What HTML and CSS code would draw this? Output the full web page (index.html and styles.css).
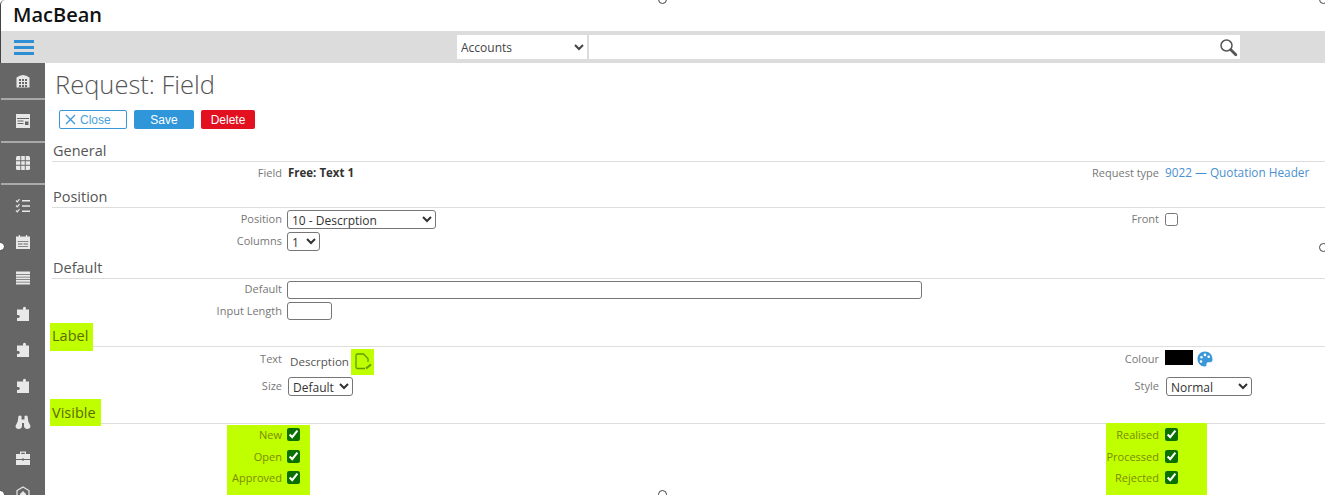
FILE: index.html
```html
<!DOCTYPE html>
<html lang="en">
<head>
<meta charset="utf-8">
<title>Request: Field</title>
<link rel="stylesheet" href="styles.css">
</head>
<body>
<svg class="defs" width="0" height="0" aria-hidden="true">
  <symbol id="puzzle" viewBox="0 0 16 16"><path d="M6 3.500h2.200c-.7-1.800.2-2.700 1.300-2.700s2 .9 1.300 2.700H14V15H2v-3.300c1.500.6 2.800-.1 2.800-1.300S3.500 8.500 2 9.100V3.500h4z"/></symbol>
</svg>
<header class="brand">MacBean</header>
<div class="toolbar">
  <button class="menu-btn" aria-label="Menu"><span></span><span></span><span></span></button>
  <div class="search">
    <select class="search-scope"><option>Accounts</option></select>
    <div class="search-box">
      <svg class="search-icon" width="19" height="19" viewBox="0 0 19 19"><circle cx="7.500" cy="7.500" r="5.500" fill="none" stroke="#555" stroke-width="1.500"/><path d="M11.800 11.800l5 5" stroke="#555" stroke-width="2.800" stroke-linecap="round"/></svg>
    </div>
  </div>
</div>
<div class="shell">
  <nav class="sidebar">
    <a class="nav-item nav-major"><svg width="16" height="16" viewBox="0 0 16 16"><path class="ic" d="M1.500 4.500Q8-.5 14.500 4.500V14.500H1.500z"/><path class="cut" d="M4 6h2v2H4zM7 6h2v2H7zM10 6h2v2h-2zM4 9h2v2H4zM7 9h2v2H7zM10 9h2v2h-2zM4 12h2v2H4zM7 12h2v2H7zM10 12h2v2h-2z"/></svg></a>
    <a class="nav-item nav-major"><svg width="16" height="16" viewBox="0 0 16 16"><path class="ic" d="M1 1h14v14H1z"/><path class="cut" d="M2 5h12v1H2zM2.500 7.500h6v1h-6zM2.500 10h6v1h-6zM10 8.500h3.500V12H10z"/></svg></a>
    <a class="nav-item nav-major"><svg width="16" height="16" viewBox="0 0 16 16"><path class="ic" d="M1 2.500Q1 1 2.500 1h11Q15 1 15 2.500v11q0 1.500-1.500 1.500h-11Q1 15 1 13.500z"/><path class="cut" d="M5.300 1h.9v14h-.9zM9.800 1h.9v14h-.9zM1 5.300h14v.9H1zM1 9.800h14v.9H1z"/></svg></a>
    <div class="nav-list">
      <a class="nav-item"><svg width="16" height="16" viewBox="0 0 16 16"><path class="line" d="M1 2.500l1.300 1.300L4.500 1.200M1 7.500l1.300 1.300 2.200-2.600M1 12.500l1.300 1.300 2.200-2.600"/><path class="ic" d="M7 2h8v1.600H7zM7 7.200h8v1.600H7zM7 12.400h8V14H7z"/></svg></a>
      <a class="nav-item"><svg width="16" height="16" viewBox="0 0 16 16"><path class="ic" d="M1 2.500h14V15H1z"/><path class="cut" d="M2.500 7h11v.8h-11zM3 9.500h4.500v1H3zM8.500 9.500H13v1H8.500zM3 12h10v.7H3z"/><path class="ic" d="M3.800 1h1.300v3H3.800zM10.900 1h1.300v3h-1.300z"/></svg></a>
      <a class="nav-item"><svg width="16" height="16" viewBox="0 0 16 16"><path class="ic" d="M1 1.500h14v13H1z"/><path class="cut" d="M1 4.200h14v.8H1zM1 6.700h14v.8H1zM1 9.200h14v.8H1zM1 11.700h14v.8H1z"/></svg></a>
      <a class="nav-item"><svg class="ic" width="16" height="16"><use href="#puzzle"/></svg></a>
      <a class="nav-item"><svg class="ic" width="16" height="16"><use href="#puzzle"/></svg></a>
      <a class="nav-item"><svg class="ic" width="16" height="16"><use href="#puzzle"/></svg></a>
      <a class="nav-item"><svg width="16" height="16" viewBox="0 0 16 16"><path class="ic" d="M3.500 2c.8-.8 2.200-.8 3 0v3.500h3V2c.8-.8 2.200-.8 3 0l.8 5.500 2.200 4.500c0 2-1.500 3-3.200 3S9 14 9 12V9H7v3c0 2-1.500 3-3.300 3S.5 14 .5 12l2.200-4.500z"/></svg></a>
      <a class="nav-item"><svg width="16" height="16" viewBox="0 0 16 16"><path class="ic" d="M5 1.500h6V4h4v11H1V4h4zM6.200 2.700V4h3.600V2.700z"/><path class="cut" d="M1 9h14v.9H1zM7 8.500h2v2H7z"/></svg></a>
      <a class="nav-item"><svg width="16" height="16" viewBox="0 0 16 16"><path class="line" d="M8 1l6 3.500v7L8 15l-6-3.500v-7z"/><path class="ic" d="M8 5l3 3v3H5V8z"/></svg></a>
    </div>
  </nav>
  <main class="content">
    <h1 class="title">Request: Field</h1>
    <div class="actions">
      <button class="btn btn-close"><svg width="11" height="11" viewBox="0 0 11 11"><path d="M1 1l9 9M10 1l-9 9" stroke="#3a97d8" stroke-width="1.300"/></svg>Close</button>
      <button class="btn btn-save">Save</button>
      <button class="btn btn-delete">Delete</button>
    </div>

    <section>
      <h2 class="section-title">General</h2>
      <div class="rows rows-general">
        <label class="lbl">Field</label>
        <div class="ctl"><strong class="value">Free: Text 1</strong></div>
        <label class="lbl lbl-right">Request type</label>
        <div class="ctl"><a class="link">9022 — Quotation Header</a></div>
      </div>
    </section>

    <section>
      <h2 class="section-title">Position</h2>
      <div class="rows rows-position">
        <label class="lbl">Position</label>
        <div class="ctl"><select class="sel sel-position"><option>10 - Descrption</option></select></div>
        <label class="lbl lbl-right">Front</label>
        <div class="ctl"><input class="check" type="checkbox"></div>
        <label class="lbl">Columns</label>
        <div class="ctl"><select class="sel sel-columns"><option>1</option></select></div>
        <span></span><span></span>
      </div>
    </section>

    <section>
      <h2 class="section-title">Default</h2>
      <div class="rows rows-default">
        <label class="lbl">Default</label>
        <div class="ctl"><input class="txt txt-default" type="text"></div>
        <span></span><span></span>
        <label class="lbl">Input Length</label>
        <div class="ctl"><input class="txt txt-length" type="text"></div>
        <span></span><span></span>
      </div>
    </section>

    <section>
      <h2 class="section-title"><span class="mark mark-label">Label</span></h2>
      <div class="rows rows-label">
        <label class="lbl lbl-raised">Text</label>
        <div class="ctl">
          <span class="label-text">Descrption</span>
          <span class="mark-icon"><svg width="20" height="20" viewBox="0 0 20 20"><path d="M12 16.500H4.500Q3 16.500 3 15V3.500Q3 2 4.500 2H10.500L15 6.500V10" fill="none" stroke="#5f9c00" stroke-width="1.300"/><path d="M13 16.500l5-4" stroke="#5f9c00" stroke-width="2"/></svg></span>
        </div>
        <label class="lbl lbl-raised lbl-right">Colour</label>
        <div class="ctl ctl-colour">
          <span class="swatch"></span>
          <svg width="16" height="16" viewBox="0 0 16 16"><path fill="#3a97d8" fill-rule="evenodd" d="M8 .5C3.700.5.500 3.800.500 8s3.300 7.500 7 7.500c1.500 0 2.200-.9 2-2-.2-1.300.3-2.300 1.800-2.300h1.900c1.400 0 2.300-1 2.300-2.700C15.500 3.500 12.300.5 8 .5zM4.500 5a1.300 1.300 0 1 1 0 2.600 1.300 1.300 0 0 1 0-2.600zM8 2.600a1.300 1.300 0 1 1 0 2.600 1.300 1.300 0 0 1 0-2.600zM11.700 4.500a1.300 1.300 0 1 1 0 2.600 1.300 1.300 0 0 1 0-2.600zM4 9.200a1.300 1.300 0 1 1 0 2.600 1.300 1.300 0 0 1 0-2.600z"/></svg>
        </div>
        <label class="lbl">Size</label>
        <div class="ctl"><select class="sel sel-size"><option>Default</option></select></div>
        <label class="lbl lbl-right">Style</label>
        <div class="ctl"><select class="sel sel-style"><option>Normal</option></select></div>
      </div>
    </section>

    <section>
      <h2 class="section-title"><span class="mark mark-visible">Visible</span></h2>
      <div class="rows rows-visible">
        <span class="mark-block mark-left"></span>
        <span class="mark-block mark-right"></span>
        <label class="lbl lbl-mark">New</label>
        <div class="ctl"><input class="check check-on" type="checkbox" checked></div>
        <label class="lbl lbl-mark lbl-right">Realised</label>
        <div class="ctl"><input class="check check-on" type="checkbox" checked></div>
        <label class="lbl lbl-mark">Open</label>
        <div class="ctl"><input class="check check-on" type="checkbox" checked></div>
        <label class="lbl lbl-mark lbl-right">Processed</label>
        <div class="ctl"><input class="check check-on" type="checkbox" checked></div>
        <label class="lbl lbl-mark">Approved</label>
        <div class="ctl"><input class="check check-on" type="checkbox" checked></div>
        <label class="lbl lbl-mark lbl-right">Rejected</label>
        <div class="ctl"><input class="check check-on" type="checkbox" checked></div>
      </div>
    </section>
  </main>
</div>
<span class="handle h-top"></span>
<span class="handle h-right"></span>
<span class="handle h-bottom"></span>
<span class="handle h-left"></span>
<span class="handle h-corner-tr"></span>
<span class="handle h-corner-bl"></span>
<span class="frame-corner"></span>
</body>
</html>
```

FILE: styles.css
```css
* { box-sizing: border-box; }
html, body { height: 495px; overflow: hidden; }
body {
  margin: 0;
  position: relative;
  background: #fff;
  color: #555;
  font-family: "Open Sans", "Liberation Sans", sans-serif;
  font-size: 11px;
}
.defs { position: absolute; }

.brand {
  height: 31px;
  padding-left: 13px;
  font-size: 20px;
  font-weight: 600;
  line-height: 30px;
  color: #111;
}

.toolbar {
  height: 32px;
  background: #dcdcdc;
  display: flex;
  align-items: center;
}
.menu-btn {
  flex: none;
  width: 20px;
  height: 15px;
  margin: 0 423px 0 14px;
  padding: 0;
  border: 0;
  background: none;
  display: flex;
  flex-direction: column;
  justify-content: space-between;
}
.menu-btn span { display: block; height: 3px; background: #2f8fd5; }
.search { display: flex; gap: 2px; }
.search-scope {
  width: 130px;
  height: 24px;
  border: 0;
  border-radius: 0;
  background-color: #fff;
  padding-left: 0;
  font: 12px "Open Sans", sans-serif;
  color: #444;
}
.search-box {
  width: 651px;
  height: 24px;
  background: #fff;
  display: flex;
  justify-content: flex-end;
  align-items: center;
  padding-right: 2px;
}

.shell { display: flex; height: 432px; }
.sidebar { width: 45px; flex: none; background: #666; overflow: hidden; }
.nav-item {
  display: flex;
  height: 36px;
  align-items: center;
  justify-content: center;
}
.nav-major { margin-left: 1px; border-bottom: 2px solid #a9a9a9; padding-right: 1px; }
.nav-major:first-child { height: 37px; margin-bottom: 1px; }
.nav-major + .nav-major { height: 42px; margin-bottom: 0; }
.nav-list { padding-top: 3px; }
.ic { fill: #e8e8e8; }
.cut { fill: #666; }
.line { fill: none; stroke: #e8e8e8; stroke-width: 1.200; }

.content { flex: 1; min-width: 0; padding-left: 7px; }
.title {
  margin: 0;
  padding: 5px 0 0 3px;
  height: 47px;
  font-size: 25.500px;
  font-weight: 300;
  line-height: 32px;
  color: #555;
}
.actions { display: flex; gap: 7px; padding-left: 7px; height: 29px; }
.btn {
  height: 19px;
  padding: 0;
  border: 0;
  border-radius: 2px;
  font: 12px "Liberation Sans", Arial, sans-serif;
  color: #fff;
  display: flex;
  align-items: center;
  justify-content: center;
}
.btn-close { width: 68px; gap: 4px; justify-content: flex-start; padding-left: 5px; background: #fff; border: 1px solid #3a97d8; color: #4a9fdc; }
.btn-save { width: 60px; background: #2e96d9; }
.btn-delete { width: 54px; background: #e3101f; }

.section-title {
  margin: 0;
  height: 23px;
  padding-left: 1px;
  border-bottom: 1px solid #ddd;
  font-size: 14.500px;
  font-weight: 400;
  line-height: 24px;
  color: #555;
}
.mark {
  display: inline-block;
  background: #bfff00;
  color: #5e6b00;
  padding: 1px 5px 3px 2px;
  margin: -1px -5px -3px -3px;
  position: relative;
}
.mark-visible { padding-bottom: 1px; padding-top: 2px; margin-top: -2px; margin-bottom: -1px; }

.rows {
  position: relative;
  display: grid;
  grid-template-columns: 230px 1fr 110px 160px;
  column-gap: 5px;
  align-items: center;
}
.rows-general { grid-auto-rows: 22px; padding-bottom: 1px; }
.rows-position { grid-auto-rows: 21.500px; padding: 1px 0 4px; }
.rows-default { grid-auto-rows: 21.500px; padding-bottom: 2px; }
.rows-label { grid-auto-rows: 25px; padding: 2px 0; }
.rows-visible { grid-auto-rows: 21.500px; }

.lbl { text-align: right; color: #777; line-height: 15px; position: relative; top: -1px; }
.lbl-right { padding-right: 1px; }
.lbl-raised { top: -3px; }
.lbl-mark { color: #7c8a00; top: 0; }
.ctl { display: flex; align-items: center; min-height: 15px; position: relative; }
.value { font-size: 11.500px; font-weight: 700; color: #333; padding-left: 1px; position: relative; top: -1px; }
.link { color: #4a90d0; font-size: 11.800px; position: relative; top: -1px; }

.sel, .txt {
  height: 19px;
  font: 12px "Open Sans", sans-serif;
  color: #333;
  border: 1px solid #767676;
  border-radius: 3px;
  background-color: #fff;
}
.sel-position { width: 149px; }
.sel-columns { width: 33px; }
.sel-size { width: 65px; margin-left: 1px; }
.sel-style { width: 86px; margin-left: 1px; }
.txt-default { width: 635px; height: 18px; }
.txt-length { width: 45px; height: 18px; }
.check { margin: 0; width: 13px; height: 13px; }
.check-on { accent-color: #0a7000; }

.label-text { font-size: 11.600px; color: #555; padding-left: 3px; width: 64px; }
.mark-icon {
  width: 23px;
  height: 26px;
  background: #bfff00;
  display: flex;
  align-items: center;
  justify-content: center;
}
.ctl-colour { gap: 4px; top: -3px; }
.swatch { width: 28px; height: 15px; margin-bottom: 3px; background: #000; }

.mark-block { position: absolute; background: #bfff00; }
.mark-left { left: 175px; width: 83px; top: 1px; height: 72px; }
.mark-right { right: 118px; width: 101px; top: -1px; height: 74px; }

.handle {
  position: absolute;
  width: 9px;
  height: 9px;
  border-radius: 50%;
  background: #fff;
  border: 1.500px solid #444;
}
.h-top { left: 658px; top: -5px; }
.h-right { left: 1319px; top: 243px; }
.h-bottom { left: 658px; top: 490px; }
.h-left { left: -4px; top: 242px; }
.h-corner-tr { left: 1319px; top: -5px; }
.h-corner-bl { left: -4px; top: 490px; }
.frame-corner {
  position: absolute;
  left: 0;
  top: 0;
  width: 5px;
  height: 63px;
  border-left: 1px solid #444;
  border-top: 0;
  border-top-left-radius: 5px;
}
```
